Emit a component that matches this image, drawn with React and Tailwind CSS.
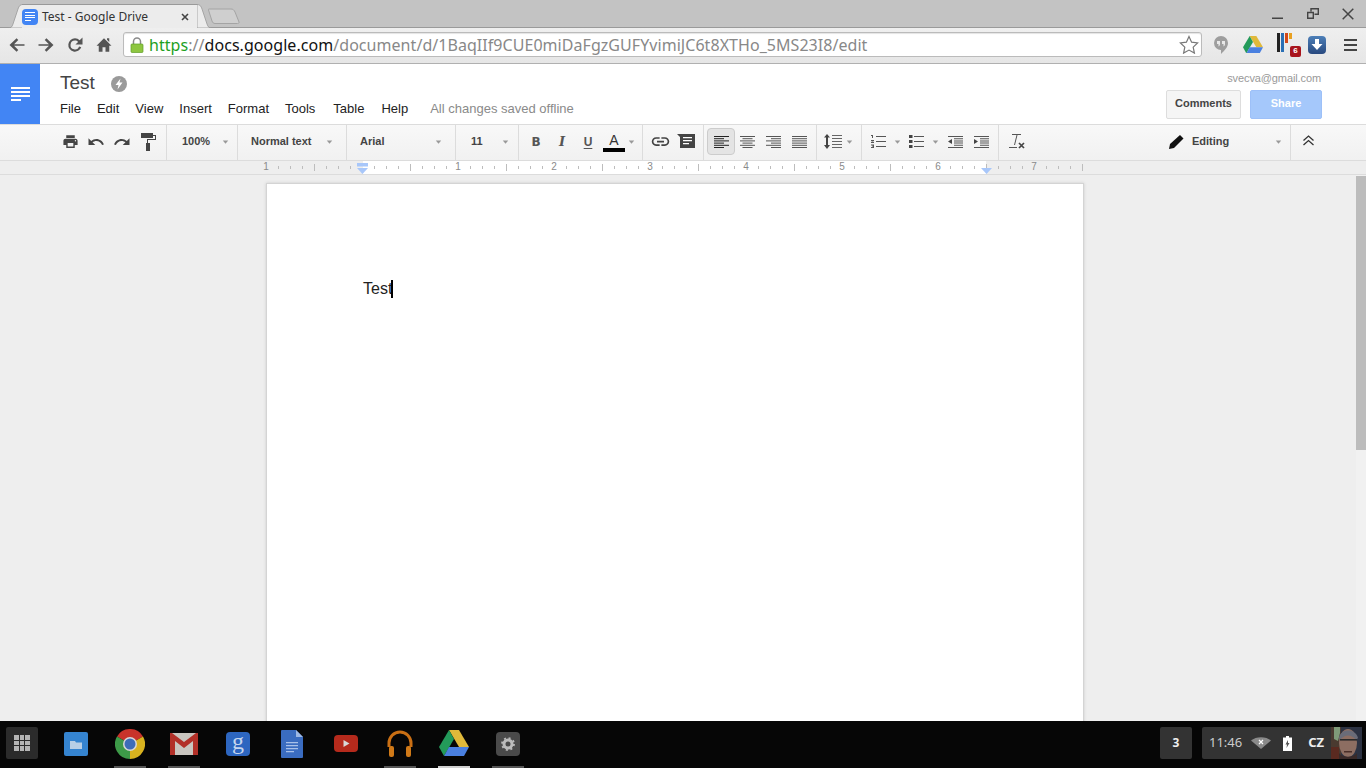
import React from "react";

const Ic = ({ d, s = 18, c = "#555", className = "" }) => (
  <svg width={s} height={s} viewBox="0 0 24 24" fill={c} className={className}><path d={d} /></svg>
);
const Caret = ({ c = "#999" }) => (
  <svg width="7" height="4" viewBox="0 0 7 4" className="shrink-0"><path d="M.8.5h5.400L3.500 3.700z" fill={c} /></svg>
);
const IconBtn = ({ children, active }) => (
  <div className={active
    ? "w-[28px] h-[27px] -mx-px flex items-center justify-center rounded-sm border border-[#ccc] bg-[#e4e4e4]"
    : "w-[26px] h-[27px] flex items-center justify-center"}>{children}</div>
);
const Lines = ({ rows }) => (
  <svg width="15" height="12" viewBox="0 0 15 12">
    {rows.map((r, i) => <rect key={i} x={r[0]} y={i * 2.2} width={r[1]} height="1" fill={rows.dark ? "#222" : "#555"} />)}
  </svg>
);
const al = [[0,15],[0,10],[0,15],[0,10],[0,15],[0,10]];
const ac = [[0,15],[2.5,10],[0,15],[2.5,10],[0,15],[2.5,10]];
const ar = [[0,15],[5,10],[0,15],[5,10],[0,15],[5,10]];
const aj = [[0,15],[0,15],[0,15],[0,15],[0,15],[0,15]];
const dark = [...al]; dark.dark = true;

const Drive = ({ s = 30 }) => (
  <svg width={s} height={s * 0.87} viewBox="0 0 30 26">
    <path d="M10 0h10l10 17H20z" fill="#e0b93a" />
    <path d="M10 0l5 9-10 17-5-9z" fill="#239a5a" />
    <path d="M10 17h20l-5 9H5z" fill="#4a80e0" />
  </svg>
);
const Chrome = () => (
  <svg width="30" height="30" viewBox="0 0 30 30">
    <path d="M15 15L2 7.5A15 15 0 0 1 28 7.5Z" fill="#c8332b" />
    <path d="M15 15L28 7.5A15 15 0 0 1 15 30Z" fill="#d8b21f" />
    <path d="M15 15L15 30A15 15 0 0 1 2 7.5Z" fill="#3d9a48" />
    <circle cx="15" cy="15" r="7" fill="#d8d8d8" />
    <circle cx="15" cy="15" r="5.5" fill="#3c6cb8" />
  </svg>
);

function TabStrip() {
  return (
    <div className="h-[28px] bg-[#c3c3c3] flex items-end relative shrink-0 border-b border-[#9a9a9a]">
      <div className="flex items-end h-[24px] ml-[8px] -mb-px">
        <svg width="15" height="24" viewBox="0 0 15 24" className="shrink-0">
          <path d="M0 24c3 0 4-1 5-4L10 5c1-3 2-4.500 5-4.500V24z" fill="#ececec" stroke="#999" strokeWidth="0.8" />
        </svg>
        <div className="w-[176px] h-[24px] bg-[#ececec] border-t border-[#999] flex items-center -mx-px">
          <div className="w-[16px] h-[16px] bg-[#4285f4] rounded-sm flex flex-col gap-[1.5px] justify-center pl-[3px] ml-0 shrink-0">
            <div className="w-[10px] h-[1px] bg-white" /><div className="w-[10px] h-[1px] bg-white" /><div className="w-[10px] h-[1px] bg-white" /><div className="w-[6px] h-[1px] bg-white" />
          </div>
          <span className="ml-[4px] text-[12px] text-[#333] font-['Noto_Sans',sans-serif] whitespace-nowrap">Test - Google Drive</span>
          <svg width="8" height="8" viewBox="0 0 8 8" className="ml-auto mr-[9px]"><path d="M1 1l6 6M7 1L1 7" stroke="#444" strokeWidth="1.600" /></svg>
        </div>
        <svg width="15" height="24" viewBox="0 0 15 24" className="shrink-0">
          <path d="M15 24c-3 0-4-1-5-4L5 5C4 2 3 .5 0 .5V24z" fill="#ececec" stroke="#999" strokeWidth="0.8" />
        </svg>
        <svg width="33" height="16" viewBox="0 0 33 16" className="shrink-0 -ml-[4px] mb-[4px]">
          <path d="M1 1h22c2 0 3 1 4 3l4 10c.3 1-.5 1.500-1.500 1.500H7c-1.500 0-2.500-1-3-2.500L.5 2C.2 1.300.5 1 1 1z" fill="#cfcfcf" stroke="#a4a4a4" />
        </svg>
      </div>
      <div className="ml-auto flex items-center h-[27px] self-start pr-[12px] gap-[23px]">
        <svg width="12" height="12" viewBox="0 0 12 12" className="mt-[1px]"><rect x="0" y="9.500" width="11" height="1.500" fill="#444" /></svg>
        <svg width="12" height="11" viewBox="0 0 12 11"><path d="M.7 4.500h5.600V10.300H.7zM4 3.500V.7h7.300v5.600H7.500" fill="none" stroke="#444" strokeWidth="1.400" /></svg>
        <svg width="12" height="12" viewBox="0 0 12 12"><path d="M.7.7l10.600 10.600M11.300.7L.7 11.300" stroke="#444" strokeWidth="1.500" /></svg>
      </div>
    </div>
  );
}

function ChromeBar() {
  return (
    <div className="h-[36px] bg-[linear-gradient(#efefef,#e6e6e6)] flex items-center shrink-0 border-b border-[#b0b0b0] pb-[2px]">
      <div className="w-[123px] flex items-center pl-[7px] gap-[9px] shrink-0">
        <Ic s={20} c="#555" d="M21 11H8.500l5-5-2-2L3 12l8.500 8 2-2-5-5H21z" />
        <Ic s={20} c="#555" d="M3 11h12.500l-5-5 2-2L21 12l-8.500 8-2-2 5-5H3z" />
        <Ic s={20} c="#555" d="M12 4a8 8 0 1 0 7.500 10.700l-2.600-.9A5.300 5.300 0 1 1 12 6.700c1.500 0 2.700.6 3.700 1.600L12.500 11.500H21V3l-3.400 3.400A8 8 0 0 0 12 4z" />
        <Ic s={18} c="#555" className="ml-[1px]" d="M10 21v-6h4v6h5v-8h3L12 3 2 13h3v8zM16 3h3v5l-3-3z" />
      </div>
      <div className="w-[1079px] h-[25px] bg-white border border-[#bbb] rounded-[3px] flex items-center shrink-0 shadow-[inset_0_1px_1px_#e4e4e4]">
        <svg width="14" height="16" viewBox="0 0 14 16" className="ml-[6px] shrink-0">
          <path d="M3.500 7V4.500a3.500 3.500 0 0 1 7 0V7" fill="none" stroke="#8a8a8a" strokeWidth="1.500" />
          <rect x="1" y="7" width="12" height="8.500" rx="1" fill="#8ec641" stroke="#5f9e27" strokeWidth="0.700" />
        </svg>
        <span className="ml-[5px] text-[16px] tracking-[0.05px] whitespace-nowrap font-['Noto_Sans',sans-serif] text-[#888] leading-none"><span className="text-[#1ea01e]">https</span>://<span className="text-[#111]">docs.google.com</span>/document/d/1BaqIIf9CUE0miDaFgzGUFYvimiJC6t8XTHo_5MS23I8/edit</span>
        <svg width="20" height="19" viewBox="0 0 20 19" className="ml-auto mr-[2px] shrink-0"><path d="M10 1.500l2.600 5.700 6 .7-4.400 4.200 1.200 6-5.400-3-5.400 3 1.200-6L1.400 7.900l6-.7z" fill="#fff" stroke="#777" strokeWidth="1.200" /></svg>
      </div>
      <div className="flex items-center flex-1 pl-[11px]">
        <svg width="16" height="20" viewBox="0 0 16 20" className="shrink-0"><path d="M8 1a7 7 0 0 1 7 7c0 4-3 7-7 11v-4A7 7 0 0 1 8 1z" fill="#9e9e9e" /><path d="M4 6h3v3c0 1-.5 2-1.500 2.500V9H4zM9 6h3v3c0 1-.5 2-1.500 2.500V9H9z" fill="#e8e8e8" /></svg>
        <div className="ml-[14px]"><Drive s={20} /></div>
        <div className="ml-[14px] relative w-[22px] h-[24px]">
          <div className="flex gap-[1px] items-start h-[20px]">
            <div className="w-[3px] h-[19px] bg-[#222]" />
            <div className="w-[3px] h-[19px] bg-[#2a6fb5]" />
            <div className="w-[3px] h-[10px] bg-[#d2491b]" />
            <div className="w-[3px] h-[6px] bg-[#e8a020]" />
          </div>
          <div className="absolute right-[-2px] bottom-[0px] w-[11px] h-[11px] bg-[#a8141c] rounded-[2px] text-white text-[8px] font-bold flex items-center justify-center font-['Liberation_Sans',sans-serif]">6</div>
        </div>
        <div className="ml-[9px] w-[18px] h-[18px] rounded-sm bg-[linear-gradient(#4d7fb8,#28497f)] flex items-center justify-center">
          <svg width="12" height="12" viewBox="0 0 12 12"><path d="M4 0h4v5h3.500L6 11 .5 5H4z" fill="#fff" /></svg>
        </div>
        <div className="ml-[18px] flex flex-col gap-[3px]">
          <div className="w-[13px] h-[2px] bg-[#444]" /><div className="w-[13px] h-[2px] bg-[#444]" /><div className="w-[13px] h-[2px] bg-[#444]" />
        </div>
      </div>
    </div>
  );
}

function DocHeader() {
  return (
    <div className="h-[60px] bg-white flex shrink-0 font-['Liberation_Sans',sans-serif]">
      <div className="w-[40px] bg-[#4285f4] flex flex-col justify-center items-center gap-[2px] shrink-0">
        <div className="w-[19px] h-[2px] bg-white" /><div className="w-[19px] h-[2px] bg-white" /><div className="w-[19px] h-[2px] bg-white" /><div className="w-[10px] h-[2px] bg-white self-start ml-[11px]" />
      </div>
      <div className="pl-[20px] flex flex-col flex-1">
        <div className="flex items-center h-[38px] pt-[1px]">
          <span className="text-[19px] text-[#444]">Test</span>
          <svg width="16" height="16" viewBox="0 0 16 16" className="ml-[16px]"><circle cx="8" cy="8" r="8" fill="#9a9a9a" /><path d="M9.500 2.500L4.500 9H7.500L6.500 13.500l5-7H8.500z" fill="#fff" /></svg>
        </div>
        <div className="flex items-center text-[13px] text-[#222] gap-[16px] h-[14px] mt-[0px]">
          <span>File</span><span>Edit</span><span>View</span><span>Insert</span><span>Format</span><span>Tools</span><span className="ml-[2px]">Table</span><span className="ml-[1px]">Help</span>
          <span className="text-[#8a8a8a] ml-[6px]">All changes saved offline</span>
        </div>
      </div>
      <div className="flex flex-col items-end pr-[44px] pt-[8px] gap-[5px]">
        <span className="text-[11px] text-[#999] leading-[13px] mr-[1px] -tracking-[0.01em]">svecva@gmail.com</span>
        <div className="flex gap-[9px]">
          <div className="w-[75px] h-[29px] pb-[2px] border border-[#ddd] rounded-[2px] bg-[#f5f5f5] text-[11px] font-bold text-[#444] flex items-center justify-center">Comments</div>
          <div className="w-[72px] h-[29px] pb-[2px] border border-[#9dc0f8] rounded-[2px] bg-[#a5c8fb] text-[11px] font-bold text-white flex items-center justify-center">Share</div>
        </div>
      </div>
    </div>
  );
}

const Dd = ({ className, label }) => (
  <div className={"h-full pb-[2px] border-r border-[#dcdcdc] flex items-center justify-between shrink-0 " + className}>
    <span className="text-[11px] font-bold text-[#444] whitespace-nowrap">{label}</span>
    <Caret />
  </div>
);

function DocToolbar() {
  return (
    <div className="h-[37px] border-t border-b border-[#dcdcdc] bg-[linear-gradient(#f8f8f8,#f1f1f1)] flex shrink-0 font-['Liberation_Sans',sans-serif]">
      <div className="w-[167px] pl-[57px] pb-[2px] h-full border-r border-[#dcdcdc] flex items-center shrink-0">
        <IconBtn><Ic s={17} c="#444" d="M19 8H5c-1.660 0-3 1.340-3 3v6h4v4h12v-4h4v-6c0-1.660-1.340-3-3-3zm-3 11H8v-5h8v5zm3-7c-.55 0-1-.45-1-1s.45-1 1-1 1 .45 1 1-.45 1-1 1zm-1-9H6v4h12V3z" /></IconBtn>
        <IconBtn><Ic s={18} c="#444" d="M12.500 8c-2.650 0-5.050.99-6.900 2.600L2 7v9h9l-3.620-3.620c1.390-1.160 3.160-1.880 5.120-1.880 3.540 0 6.550 2.310 7.600 5.500l2.370-.78C21.080 11.030 17.150 8 12.500 8z" /></IconBtn>
        <IconBtn><Ic s={18} c="#444" d="M18.400 10.600C16.550 8.990 14.150 8 11.500 8c-4.650 0-8.580 3.030-9.960 7.220L3.900 16c1.050-3.190 4.050-5.500 7.600-5.500 1.950 0 3.730.72 5.120 1.880L13 16h9V7l-3.600 3.600z" /></IconBtn>
        <IconBtn>
          <svg width="15" height="18" viewBox="0 0 15 18"><path d="M0 0h12v5H0zM12 2h3v5H7v3h2v8H5v-8h1V6h8V3h-2z" fill="#444" /></svg>
        </IconBtn>
      </div>
      <Dd className="w-[71px] pl-[15px] pr-[8px]" label="100%" />
      <Dd className="w-[109px] pl-[13px] pr-[13px]" label="Normal text" />
      <Dd className="w-[109px] pl-[13px] pr-[13px]" label="Arial" />
      <Dd className="w-[63px] pl-[15px] pr-[9px]" label="11" />
      <div className="w-[124px] pl-[4px] pb-[2px] h-full border-r border-[#dcdcdc] flex items-center shrink-0">
        <IconBtn><span className="text-[12px] font-bold text-[#555] font-['DejaVu_Sans',sans-serif]">B</span></IconBtn>
        <IconBtn><span className="text-[13px] font-bold italic text-[#555] font-['DejaVu_Serif',serif]">I</span></IconBtn>
        <IconBtn><span className="text-[12px] font-bold text-[#555] underline underline-offset-2">U</span></IconBtn>
        <IconBtn>
          <div className="flex flex-col items-center mt-[2px]">
            <span className="text-[14px] leading-[14px] text-[#333]">A</span>
            <div className="w-[22px] h-[4px] bg-black mt-[1px]" />
          </div>
        </IconBtn>
        <div className="ml-[1px]"><Caret /></div>
      </div>
      <div className="w-[61px] pl-[4px] pb-[2px] h-full border-r border-[#dcdcdc] flex items-center shrink-0">
        <IconBtn><Ic s={21} c="#444" d="M3.900 12c0-1.710 1.390-3.100 3.100-3.100h4V7H7c-2.760 0-5 2.240-5 5s2.240 5 5 5h4v-1.900H7c-1.710 0-3.100-1.390-3.100-3.100zM8 13h8v-2H8v2zm9-6h-4v1.900h4c1.710 0 3.100 1.390 3.100 3.100s-1.390 3.100-3.100 3.100h-4V17h4c2.760 0 5-2.240 5-5s-2.240-5-5-5z" /></IconBtn>
        <IconBtn>
          <svg width="18" height="15" viewBox="0 0 18 15"><path d="M0 0h18v14H3V3z" fill="#444" /><path d="M6 3h9v1.200H6zM6 6h9v1.200H6zM6 9h6v1.200H6z" fill="#fff" /></svg>
        </IconBtn>
      </div>
      <div className="w-[113px] pl-[4px] pb-[2px] h-full border-r border-[#dcdcdc] flex items-center shrink-0">
        <IconBtn active><Lines rows={dark} /></IconBtn>
        <IconBtn><Lines rows={ac} /></IconBtn>
        <IconBtn><Lines rows={ar} /></IconBtn>
        <IconBtn><Lines rows={aj} /></IconBtn>
      </div>
      <div className="w-[45px] pl-[3px] pb-[2px] h-full border-r border-[#dcdcdc] flex items-center shrink-0">
        <IconBtn>
          <svg width="18" height="15" viewBox="0 0 18 15"><path d="M3 0l3 3.500H4V11h2l-3 4-3-4h2V3.500H0z" fill="#444" /><path d="M8 1h10v1H8zM8 4h10v1H8zM8 7h10v1H8zM8 10h10v1H8zM8 13h10v1H8z" fill="#666" /></svg>
        </IconBtn>
        <div className="ml-[0px]"><Caret /></div>
      </div>
      <div className="w-[137px] pl-[3px] pb-[2px] h-full border-r border-[#dcdcdc] flex items-center shrink-0">
        <IconBtn>
          <svg width="15" height="13" viewBox="0 0 15 13"><path d="M5 1h10v1H5zM5 6h10v1H5zM5 11h10v1H5z" fill="#555" /><path d="M0 0h2v3H1V1H0zM0 5h3v1L1 7h2v1H0V7l2-1H0zM0 9.500h3v3.500H0v-1h2v-.5H1v-.8h1v-.2H0z" fill="#555" /></svg>
        </IconBtn>
        <div className="ml-[3px]"><Caret /></div>
        <div className="ml-[2px]"><IconBtn>
          <svg width="15" height="13" viewBox="0 0 15 13"><path d="M5 1h10v1H5zM5 6h10v1H5zM5 11h10v1H5z" fill="#555" /><rect x="0" y="0" width="3.500" height="3" fill="#444" /><rect x="0" y="5" width="3.500" height="3" fill="#444" /><rect x="0" y="10" width="3.500" height="3" fill="#444" /></svg>
        </IconBtn></div>
        <div className="ml-[3px]"><Caret /></div>
        <div className="ml-[3px]"><IconBtn>
          <svg width="15" height="12" viewBox="0 0 15 12"><path d="M0 0h15v1H0zM6 2.200h9v1H6zM6 4.400h9v1H6zM6 6.600h9v1H6zM6 8.800h9v1H6zM0 11h15v1H0z" fill="#555" /><path d="M4 3v5L0 5.500z" fill="#444" /></svg>
        </IconBtn></div>
        <IconBtn>
          <svg width="15" height="12" viewBox="0 0 15 12"><path d="M0 0h15v1H0zM6 2.200h9v1H6zM6 4.400h9v1H6zM6 6.600h9v1H6zM6 8.800h9v1H6zM0 11h15v1H0z" fill="#555" /><path d="M0 3v5l4-2.500z" fill="#444" /></svg>
        </IconBtn>
      </div>
      <div className="pl-[5px] pb-[2px] h-full flex items-center">
        <IconBtn>
          <svg width="17" height="16" viewBox="0 0 17 16"><path d="M3 0h9v1H8.500L6 11H5L7.500 1H3zM0 13h8v1H0z" fill="#555" /><path d="M10 9l5 5M15 9l-5 5" stroke="#444" strokeWidth="1.700" /></svg>
        </IconBtn>
      </div>
      <div className="ml-auto flex h-full">
        <div className="w-[123px] h-full pb-[2px] border-r border-[#dcdcdc] flex items-center pl-[1px] pr-[8px]">
          <svg width="15" height="14" viewBox="0 0 15 14"><path d="M11 0l3.500 3.500L5 13 0 14l1-5z" fill="#111" /></svg>
          <span className="ml-[8px] text-[11px] font-bold text-[#444]">Editing</span>
          <div className="ml-auto"><Caret /></div>
        </div>
        <div className="w-[75px] flex items-start justify-start pl-[12px] pt-[10px]">
          <svg width="11" height="11" viewBox="0 0 11 11"><path d="M.5 5.500L5.500 1l5 4.500M.5 10L5.500 5.500l5 4.500" fill="none" stroke="#333" strokeWidth="1.300" /></svg>
        </div>
      </div>
    </div>
  );
}

function Ruler() {
  const ticks = [];
  for (let x = 278; x <= 1082; x += 12) {
    const off = ((x - 362) % 96 + 96) % 96;
    if (off === 0) continue;
    ticks.push(<rect key={x} x={x} y={off === 48 ? 3 : 5} width="1" height={off === 48 ? 7 : 3} fill="#bdbdbd" />);
  }
  const labels = [[266,1],[458,1],[554,2],[650,3],[746,4],[842,5],[938,6],[1034,7]];
  return (
    <div className="h-[14px] bg-[#eeeeee] border-b border-[#dcdcdc] shrink-0">
      <svg width="1366" height="13" viewBox="0 0 1366 13" className="block">
        <rect x="363" y="0" width="623" height="13" fill="#fff" />
        {ticks}
        {labels.map(([x, n], i) => (
          <text key={i} x={x} y="9" textAnchor="middle" fontSize="10" fill="#8a8a8a" fontFamily="Liberation Sans, sans-serif">{n}</text>
        ))}
        <rect x="357" y="2" width="11" height="3.500" fill="#a8c7fa" />
        <path d="M357 7h11l-5.500 6z" fill="#a8c7fa" />
        <path d="M981 7h11l-5.500 6z" fill="#a8c7fa" />
      </svg>
    </div>
  );
}

function Taskbar() {
  const apps = [
    [<svg width="24" height="24" viewBox="0 0 24 24"><rect width="24" height="24" rx="2" fill="#3584d0" /><path d="M6 9h5l1 1.500h6V17H6z" fill="#b8cfe6" /></svg>, 0],
    [<Chrome />, 1],
    [<svg width="28" height="24" viewBox="0 0 28 24"><rect y="1" width="28" height="22" fill="#c9c5bf" /><path d="M0 1v22h5V9l9 7 9-7v14h5V1h-2L14 10 2 1z" fill="#b23028" /></svg>, 1],
    [<div className="w-[24px] h-[24px] bg-[#2d66c0] rounded-sm flex items-center justify-center text-[24px] leading-none text-[#c6d6ee] font-['Liberation_Serif',serif] pb-[5px]">g</div>, 0],
    [<svg width="22" height="28" viewBox="0 0 22 28"><path d="M1 0h14l7 7v20a1 1 0 0 1-1 1H1a1 1 0 0 1-1-1V1a1 1 0 0 1 1-1z" fill="#3a6cc0" /><path d="M15 0l7 7h-7z" fill="#9db8e4" /><path d="M5 12h12v1.200H5zM5 15h12v1.200H5zM5 18h12v1.200H5zM5 21h8v1.200H5z" fill="#a8c0e8" /></svg>, 0],
    [<svg width="24" height="17" viewBox="0 0 24 17"><rect width="24" height="17" rx="4" fill="#b52a1c" /><path d="M9.500 5l6 3.500-6 3.500z" fill="#d8d8d8" /></svg>, 0],
    [<svg width="28" height="28" viewBox="0 0 28 28"><path d="M3 17v-4a11 11 0 0 1 22 0v4" fill="none" stroke="#c96f14" strokeWidth="3" /><rect x="3" y="16" width="5" height="11" rx="2" fill="#d07a18" /><rect x="20" y="16" width="5" height="11" rx="2" fill="#d07a18" /></svg>, 1],
    [<Drive s={30} />, 2],
    [<div className="w-[24px] h-[24px] bg-[#4a4a4a] rounded-sm flex items-center justify-center"><svg width="14" height="14" viewBox="0 0 14 14"><circle cx="7" cy="7" r="4" fill="none" stroke="#bbb" strokeWidth="3" /><circle cx="7" cy="7" r="6" fill="none" stroke="#bbb" strokeWidth="1.800" strokeDasharray="2 2.700" /></svg></div>, 1],
  ];
  return (
    <div className="h-[47px] bg-[#060606] flex shrink-0 items-start font-['Noto_Sans',sans-serif]">
      <div className="w-[32px] h-[32px] ml-[6px] mt-[6px] rounded-[2px] bg-[#2b2b2b] grid grid-cols-3 gap-[1px] p-[8px] shrink-0">
        {[...Array(9)].map((_, i) => <div key={i} className="bg-[#b5b5b5]" />)}
      </div>
      <div className="flex ml-[11px] h-full">
        {apps.map(([icon, run], i) => (
          <div key={i} className="w-[54px] h-full flex flex-col items-center">
            <div className="flex-1 flex items-center justify-center">{icon}</div>
            <div className={run === 2 ? "w-[32px] h-[2px] bg-[#d0d0d0]" : run === 1 ? "w-[32px] h-[2px] bg-[#555]" : "w-[32px] h-[2px]"} />
          </div>
        ))}
      </div>
      <div className="ml-auto flex items-center mt-[6px] mr-[4px]">
        <div className="w-[32px] h-[32px] bg-[#333] rounded-[2px] text-[12px] font-bold text-[#eee] flex items-center justify-center">3</div>
        <div className="ml-[10px] w-[130px] h-[32px] bg-[#333] rounded-l-[2px] flex items-center pl-[7px] text-[13px] text-[#ccc]">
          <span>11:46</span>
          <svg width="20" height="12" viewBox="0 0 20 12" className="ml-[9px]"><path d="M0 3.500C5-1 15-1 20 3.500L10 12z" fill="#8a8a8a" /><path d="M8 3l4 4M12 3L8 7" stroke="#fff" strokeWidth="1.200" /></svg>
          <svg width="9" height="15" viewBox="0 0 9 15" className="ml-[12px]"><path d="M3 0h3v1.500h3V15H0V1.500h3z" fill="#fff" /><path d="M5 4L2.500 8.500H4L3.500 12 6.500 7H5z" fill="#555" /></svg>
          <span className="ml-[16px] text-[13px] font-bold text-[#eee]">CZ</span>
        </div>
        <svg width="31" height="32" viewBox="0 0 31 32" className="-ml-px">
          <rect width="31" height="32" fill="#2c3242" />
          <rect x="0" y="0" width="10" height="32" fill="#4a3a30" />
          <path d="M3 0h6v6l-2 8-4-2z" fill="#7f9a78" />
          <rect x="0" y="20" width="8" height="12" fill="#5a2a20" />
          <ellipse cx="17" cy="16" rx="9" ry="14" fill="#8d6e62" />
          <path d="M8 11C9 1 25 1 27 11l-2 2C21 7 13 7 9 13z" fill="#6a6c78" />
          <rect x="9" y="12" width="17" height="1.600" fill="#2a2a2a" />
          <rect x="13" y="24" width="8" height="1.500" fill="#4a2e28" />
          <path d="M8 26c3 5 15 5 18 0v6H8z" fill="#3a2a28" />
        </svg>
      </div>
    </div>
  );
}

export default function App() {
  return (
    <div className="w-[1366px] h-[768px] overflow-hidden flex flex-col bg-[#eeeeee]">
      <TabStrip />
      <ChromeBar />
      <DocHeader />
      <DocToolbar />
      <Ruler />
      <div className="flex-1 flex overflow-hidden min-h-0">
        <div className="flex-1 pl-[266px] pt-[8px] min-w-0">
          <div className="w-[818px] h-[800px] bg-white border border-[#d4d4d4] shadow-[0_0_3px_#ccc] pl-[96px] pt-[95px] font-['Liberation_Sans',sans-serif] text-[16px] text-[#222]">
            <div className="flex items-center h-[20px]">
              <span>Test</span>
              <div className="w-[2px] h-[18px] bg-black -ml-px" />
            </div>
          </div>
        </div>
        <div className="w-[10px] bg-[#f1f1f1] shrink-0">
          <div className="w-full h-[274px] bg-[#bcbcbc] mt-px" />
        </div>
      </div>
      <Taskbar />
    </div>
  );
}
